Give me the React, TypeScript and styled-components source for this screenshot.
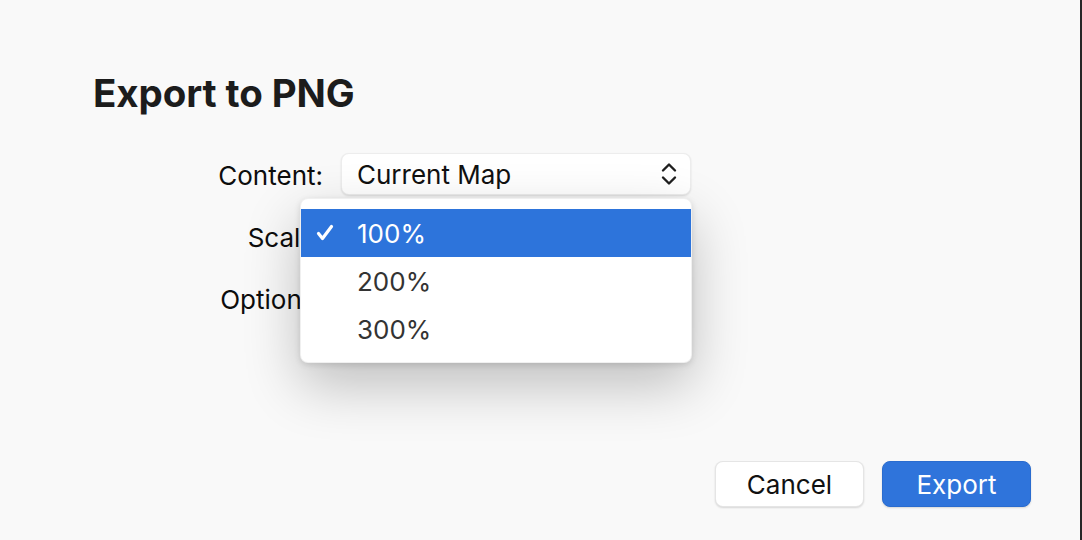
import styled, { createGlobalStyle } from 'styled-components';

const GlobalStyle = createGlobalStyle`
  html, body {
    margin: 0;
    padding: 0;
    background: #f9f9f9;
  }
  * {
    box-sizing: border-box;
  }
`;

const SCALES = ['100%', '200%', '300%'];

const ChevronsIcon = () => (
  <svg width='18' height='28' viewBox='0 0 18 28' fill='none'>
    <path
      d='M3 10.5 L9 4.5 L15 10.5'
      stroke='#1f1f1f'
      strokeWidth='2.4'
      strokeLinecap='round'
      strokeLinejoin='round'
    />
    <path
      d='M3 17.5 L9 23.5 L15 17.5'
      stroke='#1f1f1f'
      strokeWidth='2.4'
      strokeLinecap='round'
      strokeLinejoin='round'
    />
  </svg>
);

const CheckIcon = () => (
  <svg width='18' height='18' viewBox='0 0 18 18' fill='none'>
    <path
      d='M2.5 9.5 L6.5 14.5 L15.5 2.5'
      stroke='#fff'
      strokeWidth='3.2'
      strokeLinecap='round'
      strokeLinejoin='round'
    />
  </svg>
);

const App = () => {
  return (
    <>
      <GlobalStyle />
      <Window>
        <Title>Export to PNG</Title>
        <Form>
          <Label>Content:</Label>
          <Control>
            <PopupButton>
              <span>Current Map</span>
              <ChevronsIcon />
            </PopupButton>
          </Control>

          <Label>Scale:</Label>
          <Control>
            <PopupButton>
              <span>100%</span>
              <ChevronsIcon />
            </PopupButton>
            <Menu>
              {SCALES.map((scale, i) => (
                <MenuItem key={scale} $selected={i === 0}>
                  <CheckSlot>{i === 0 && <CheckIcon />}</CheckSlot>
                  {scale}
                </MenuItem>
              ))}
            </Menu>
          </Control>

          <Label>Options:</Label>
          <Control>
            <CheckRow>
              <CheckBox />
              <span>Transparent</span>
            </CheckRow>
          </Control>
        </Form>

        <Footer>
          <Button>Cancel</Button>
          <Button $primary>Export</Button>
        </Footer>
      </Window>
    </>
  );
};

const Window = styled.div`
  width: 1082px;
  height: 540px;
  display: flex;
  flex-direction: column;
  padding: 70px 49px 33px 93px;
  background: #f9f9f9;
  border-right: 2px solid #262626;
  font-family: Inter, 'Noto Sans', sans-serif;
  color: #111;
  overflow: hidden;
`;

const Title = styled.h1`
  margin: 0 0 37px;
  font-size: 38.5px;
  line-height: 46px;
  font-weight: 700;
  letter-spacing: -0.1px;
  color: #1c1c1c;
`;

const Form = styled.div`
  display: grid;
  grid-template-columns: 230px 350px;
  grid-auto-rows: 42px;
  column-gap: 18px;
  row-gap: 20px;
  align-items: center;
`;

const Label = styled.div`
  height: 42px;
  padding-top: 4px;
  text-align: right;
  font-size: 26px;
  line-height: 38px;
  color: #0d0d0d;
`;

const Control = styled.div`
  position: relative;
  height: 42px;
  display: flex;
  align-items: center;
`;

const PopupButton = styled.div`
  width: 100%;
  height: 42px;
  display: flex;
  align-items: center;
  justify-content: space-between;
  padding: 0 12px 0 15px;
  background: #fff;
  border: 1px solid rgba(0, 0, 0, 0.07);
  border-radius: 8px;
  box-shadow: 0 1px 2px rgba(0, 0, 0, 0.12);
  font-size: 26px;
  color: #111;
`;

const Menu = styled.div`
  position: absolute;
  top: -17px;
  left: -41px;
  width: 392px;
  padding: 10px 0 9px;
  background: #fff;
  border-radius: 8px;
  border: 1px solid rgba(0, 0, 0, 0.06);
  box-shadow:
    0 22px 55px rgba(0, 0, 0, 0.24),
    0 2px 6px rgba(0, 0, 0, 0.12);
  z-index: 2;
`;

const MenuItem = styled.div<{ $selected?: boolean }>`
  height: 48px;
  display: flex;
  align-items: center;
  font-size: 26px;
  color: ${(p) => (p.$selected ? '#fff' : '#333')};
  background: ${(p) => (p.$selected ? '#2d74db' : 'transparent')};
`;

const CheckSlot = styled.span`
  width: 56px;
  padding-left: 15px;
  display: flex;
  align-items: center;
`;

const CheckRow = styled.label`
  display: flex;
  align-items: center;
  gap: 10px;
  font-size: 26px;
`;

const CheckBox = styled.span`
  width: 20px;
  height: 20px;
  border-radius: 5px;
  background: #fff;
  border: 1px solid #c8c8c8;
`;

const Footer = styled.div`
  margin-top: auto;
  display: flex;
  justify-content: flex-end;
  gap: 18px;
`;

const Button = styled.button<{ $primary?: boolean }>`
  width: 149px;
  height: 46px;
  border-radius: 8px;
  font-family: Inter, 'Noto Sans', sans-serif;
  font-size: 26px;
  cursor: pointer;
  color: ${(p) => (p.$primary ? '#fff' : '#111')};
  background: ${(p) => (p.$primary ? '#2f74db' : '#fff')};
  border: 1px solid ${(p) => (p.$primary ? '#2a6ccf' : 'rgba(0, 0, 0, 0.1)')};
  box-shadow: 0 1px 2px rgba(0, 0, 0, 0.14);
`;

export default App;
